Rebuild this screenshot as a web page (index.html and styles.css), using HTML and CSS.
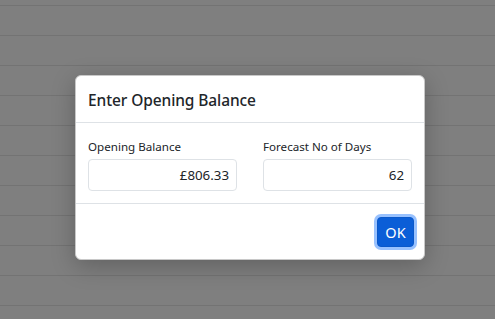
FILE: index.html
```html
<!DOCTYPE html>
<html>
<head>
<meta charset="utf-8">
<link rel="stylesheet" href="styles.css">
</head>
<body>
<div class="page">
  <div class="row"></div><div class="row"></div><div class="row"></div><div class="row"></div><div class="row"></div>
  <div class="row"></div><div class="row"></div><div class="row"></div><div class="row"></div><div class="row"></div>
  <div class="row last"></div>
</div>
<div class="backdrop">
  <div class="modal">
    <div class="modal-header"><h5 class="modal-title">Enter Opening Balance</h5></div>
    <div class="modal-body">
      <div class="field">
        <label class="label">Opening Balance</label>
        <div class="input">£806.33</div>
      </div>
      <div class="field">
        <label class="label">Forecast No of Days</label>
        <div class="input">62</div>
      </div>
    </div>
    <div class="modal-footer"><button class="btn">OK</button></div>
  </div>
</div>
</body>
</html>
```
FILE: styles.css
```css
html, body { margin: 0; padding: 0; }
body {
  width: 495px; height: 319px; overflow: hidden;
  background: #7f7f7f;
  font-family: "Noto Sans", "Open Sans", sans-serif;
  position: relative;
}
.page { padding-top: 5px; height: 319px; box-sizing: border-box; overflow: hidden; }
.row { height: 30px; box-sizing: border-box; border-top: 1px solid #737373; }
.row.last { height: 14px; }
.backdrop {
  position: absolute; inset: 0;
  display: flex; align-items: flex-start;
}
.modal {
  margin: 75px 0 0 75px;
  width: 350px; box-sizing: border-box;
  background: #fff;
  border: 1px solid #c8c8c8;
  border-radius: 6px;
  box-shadow: 0 6px 24px rgba(0,0,0,0.24);
  color: #212529;
}
.modal-header {
  height: 47px; box-sizing: border-box;
  padding: 1px 12px 0;
  display: flex; align-items: center;
  border-bottom: 1px solid #dee2e6;
}
.modal-title { margin: 0; font-size: 15.5px; font-weight: 500; letter-spacing: -0.1px; }
.modal-body {
  padding: 14px 12px 12px 12px;
  display: grid; grid-template-columns: 1fr 1fr; column-gap: 26px;
  border-bottom: 1px solid #dee2e6;
}
.field { display: flex; flex-direction: column; }
.label { font-size: 11.6px; line-height: 20px; margin-bottom: 2px; }
.input {
  height: 32px; box-sizing: border-box;
  border: 1px solid #dee2e6; border-radius: 4px;
  padding: 0 7px;
  display: flex; align-items: center; justify-content: flex-end;
  font-size: 13.3px;
}
.modal-footer {
  height: 55px; box-sizing: border-box;
  display: flex; align-items: center; justify-content: flex-end;
  padding: 0 10px;
}
.btn {
  font-family: inherit;
  width: 37px; height: 30px; padding: 0;
  background: #0b5ed7; color: #fff;
  border: 1px solid #0a58ca; border-radius: 4px;
  font-size: 14.5px;
  box-shadow: 0 0 0 3px #98c1fe;
}
```
